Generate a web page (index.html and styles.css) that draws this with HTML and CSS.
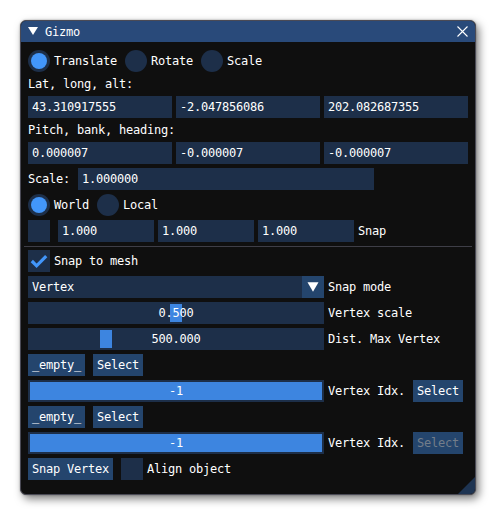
FILE: index.html
```html
<!DOCTYPE html>
<html>
<head>
<meta charset="utf-8">
<link rel="stylesheet" href="styles.css">
</head>
<body>
<div class="window">
  <div class="titlebar">
    <svg class="collapse" width="10" height="8" viewBox="0 0 10 8"><polygon points="0,0 10,0 5,8" fill="#ffffff"/></svg>
    <span class="title">Gizmo</span>
    <svg class="close" width="11" height="11" viewBox="0 0 11 11"><path d="M0.5 0.5 L10.5 10.5 M10.5 0.5 L0.5 10.5" stroke="#ffffff" stroke-width="1.1" fill="none"/></svg>
  </div>
  <div class="content">
    <div class="row">
      <div class="opt"><span class="radio on"></span><span>Translate</span></div>
      <div class="opt"><span class="radio"></span><span>Rotate</span></div>
      <div class="opt"><span class="radio"></span><span>Scale</span></div>
    </div>
    <div class="text">Lat, long, alt:</div>
    <div class="row inner">
      <div class="frame grow">43.310917555</div>
      <div class="frame grow">-2.047856086</div>
      <div class="frame grow">202.082687355</div>
    </div>
    <div class="text">Pitch, bank, heading:</div>
    <div class="row inner">
      <div class="frame grow">0.000007</div>
      <div class="frame grow">-0.000007</div>
      <div class="frame grow">-0.000007</div>
    </div>
    <div class="row">
      <span>Scale:</span>
      <div class="frame w296">1.000000</div>
    </div>
    <div class="row">
      <div class="opt"><span class="radio on"></span><span>World</span></div>
      <div class="opt"><span class="radio"></span><span>Local</span></div>
    </div>
    <div class="row">
      <span class="check"></span>
      <div class="group">
        <div class="frame w96">1.000</div>
        <div class="frame w96">1.000</div>
        <div class="frame w96">1.000</div>
        <span>Snap</span>
      </div>
    </div>
    <div class="separator"></div>
    <div class="row inner">
      <span class="check"><svg width="22" height="22" viewBox="0 0 22 22"><polyline points="3.8,11 8.6,15.8 18.2,6.2" fill="none" stroke="#4296fa" stroke-width="3.2"/></svg></span>
      <span>Snap to mesh</span>
    </div>
    <div class="row inner">
      <div class="frame combo w296"><span class="combo-text">Vertex</span><span class="arrow"><svg width="22" height="22" viewBox="0 0 22 22"><polygon points="5.5,6.2 16.5,6.2 11,15.8" fill="#ffffff"/></svg></span></div>
      <span>Snap mode</span>
    </div>
    <div class="row inner">
      <div class="frame slider w296"><span class="grab" style="left:142px"></span><span class="val">0.500</span></div>
      <span>Vertex scale</span>
    </div>
    <div class="row inner">
      <div class="frame slider w296"><span class="grab" style="left:72px"></span><span class="val">500.000</span></div>
      <span>Dist. Max Vertex</span>
    </div>
    <div class="row">
      <div class="button">_empty_</div>
      <div class="button">Select</div>
    </div>
    <div class="row">
      <div class="group">
        <div class="frame slider full w296"><span class="fill"></span><span class="val">-1</span></div>
        <span>Vertex Idx.</span>
      </div>
      <div class="button">Select</div>
    </div>
    <div class="row">
      <div class="button">_empty_</div>
      <div class="button">Select</div>
    </div>
    <div class="row">
      <div class="group">
        <div class="frame slider full w296"><span class="fill"></span><span class="val">-1</span></div>
        <span>Vertex Idx.</span>
      </div>
      <div class="button disabled">Select</div>
    </div>
    <div class="row">
      <div class="button">Snap Vertex</div>
      <div class="group">
        <span class="check"></span>
        <span>Align object</span>
      </div>
    </div>
  </div>
  <svg class="grip" width="17" height="17" viewBox="0 0 17 17"><polygon points="17,0 17,17 0,17" fill="#1e3452"/></svg>
</div>
</body>
</html>
```

FILE: styles.css
```css
html, body {
  margin: 0;
  padding: 0;
  background: #ffffff;
}

body {
  padding: 20px;
  font-family: "DejaVu Sans Mono", "Liberation Mono", monospace;
  font-size: 12px;
  letter-spacing: -0.22px;
  line-height: 16px;
  color: #ffffff;
}

.window {
  position: relative;
  width: 456px;
  height: 475px;
  box-sizing: border-box;
  border: 1px solid #4a4a55;
  border-radius: 6px;
  background: #0f0f0f;
  overflow: hidden;
  box-shadow: 3px 4px 8px rgba(0, 0, 0, 0.5), 0 0 2px rgba(0, 0, 0, 0.35);
}

.titlebar {
  height: 21px;
  background: #294a7a;
  display: flex;
  align-items: center;
  padding: 0 7px;
}

.collapse {
  flex: none;
  margin-top: -1px;
}

.title {
  margin-left: 7px;
  flex: 1;
}

.close {
  flex: none;
}

.content {
  padding: 8px 7px 0 7px;
  display: flex;
  flex-direction: column;
  gap: 4px;
}

.row {
  height: 22px;
  display: flex;
  align-items: center;
  gap: 8px;
  white-space: pre;
}

.row.inner,
.group {
  gap: 4px;
}

.group {
  display: flex;
  align-items: center;
}

.text {
  height: 16px;
  white-space: pre;
}

.opt {
  display: flex;
  align-items: center;
  gap: 4px;
}

.radio {
  width: 22px;
  height: 22px;
  border-radius: 50%;
  background: #1d2f49;
  position: relative;
  flex: none;
}

.radio.on::after {
  content: "";
  position: absolute;
  left: 3px;
  top: 3px;
  width: 16px;
  height: 16px;
  border-radius: 50%;
  background: #4296fa;
}

.check {
  width: 22px;
  height: 22px;
  background: #1d2f49;
  flex: none;
  display: block;
}

.check svg {
  display: block;
}

.frame {
  height: 22px;
  box-sizing: border-box;
  background: #1d2f49;
  padding: 0 4px;
  display: flex;
  align-items: center;
  white-space: pre;
  flex: none;
}

.frame.grow {
  flex: 1;
}

.w296 {
  width: 296px;
}

.w96 {
  width: 96px;
}

.combo {
  padding: 0 0 0 4px;
}

.combo-text {
  flex: 1;
}

.arrow {
  width: 22px;
  height: 22px;
  background: #24456d;
  flex: none;
}

.arrow svg {
  display: block;
}

.slider {
  position: relative;
  justify-content: center;
}

.grab {
  position: absolute;
  top: 2px;
  width: 12px;
  height: 18px;
  background: #3d85e0;
}

.fill {
  position: absolute;
  left: 2px;
  right: 2px;
  top: 2px;
  bottom: 2px;
  background: #3d85e0;
}

.val {
  position: relative;
  z-index: 1;
}

.button {
  height: 22px;
  box-sizing: border-box;
  padding: 0 4px;
  background: #24456d;
  display: flex;
  align-items: center;
  white-space: pre;
  flex: none;
}

.button.disabled {
  color: #737d8a;
}

.separator {
  height: 1px;
  background: #3e3e47;
  margin: 0 -4px -1px -4px;
}

.grip {
  position: absolute;
  right: 0;
  bottom: 0;
  display: block;
}
```
